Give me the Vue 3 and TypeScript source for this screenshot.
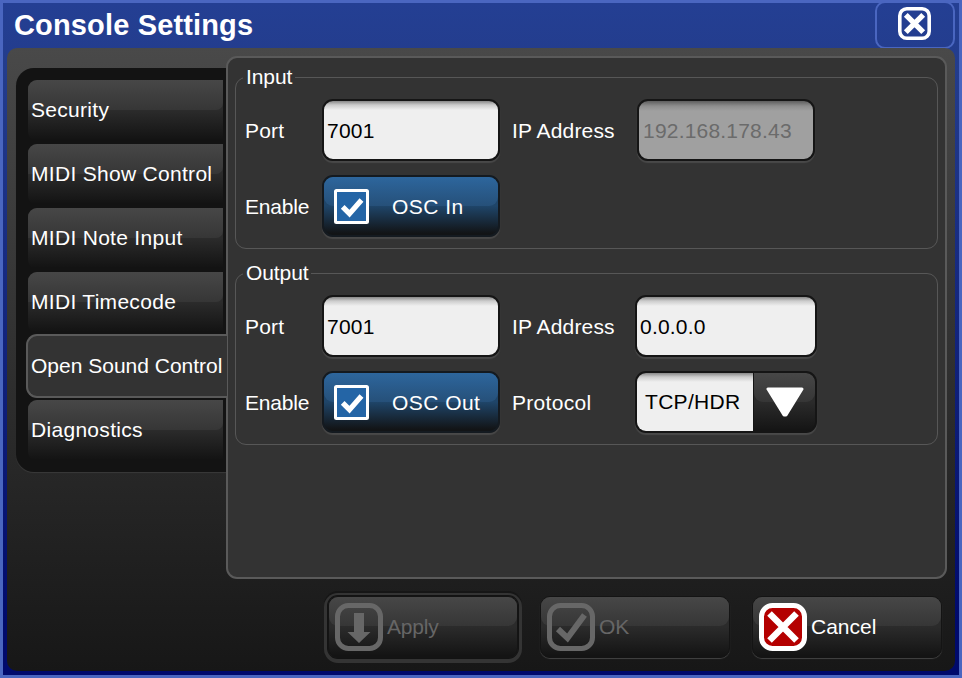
<script setup lang="ts">
import { ref } from 'vue'

const tabs: string[] = [
  'Security',
  'MIDI Show Control',
  'MIDI Note Input',
  'MIDI Timecode',
  'Open Sound Control',
  'Diagnostics',
]
const activeTab = ref('Open Sound Control')
const inputPort = ref('7001')
const outputPort = ref('7001')
const inputAddress = '192.168.178.43'
const outputAddress = ref('0.0.0.0')
const oscIn = ref(true)
const oscOut = ref(true)
const protocol = ref('TCP/HDR')
</script>

<template>
  <div class="window">
    <header class="titlebar">
      <h1>Console Settings</h1>
      <button class="close" aria-label="Close">
        <svg width="33" height="33" viewBox="0 0 33 33">
          <rect x="1.8" y="1.8" width="29.4" height="29.4" rx="7" fill="none" stroke="#fff" stroke-width="3.6" />
          <path d="M7.800 7.800L25.200 25.200M25.200 7.800L7.800 25.200" stroke="#fff" stroke-width="5.4" />
        </svg>
      </button>
    </header>

    <main class="body">
      <div class="content">
        <nav class="tabs">
          <button
            v-for="tab in tabs"
            :key="tab"
            class="tab"
            :class="tab === activeTab ? 'active' : 'gloss'"
            @click="activeTab = tab"
          >
            {{ tab }}
          </button>
        </nav>

        <section class="panel">
          <div class="group">
            <div class="legend">Input</div>
            <div class="grid">
              <span>Port</span>
              <input v-model="inputPort" class="field port" />
              <span>IP Address</span>
              <input :value="inputAddress" class="field disabled" disabled />
              <span class="tight">Enable</span>
              <button class="toggle gloss" @click="oscIn = !oscIn">
                <svg class="box" width="35" height="35" viewBox="0 0 35 35">
                  <rect x="1.5" y="1.5" width="32" height="32" rx="1" fill="#2465a6" stroke="#fff" stroke-width="3" />
                  <path v-if="oscIn" d="M8.700 17.800L15.500 24.600L27.500 11" fill="none" stroke="#fff" stroke-width="5.2" />
                </svg>
                <span>OSC In</span>
              </button>
            </div>
          </div>

          <div class="group">
            <div class="legend">Output</div>
            <div class="grid">
              <span>Port</span>
              <input v-model="outputPort" class="field port" />
              <span>IP Address</span>
              <input v-model="outputAddress" class="field wide" />
              <span class="tight">Enable</span>
              <button class="toggle gloss" @click="oscOut = !oscOut">
                <svg class="box" width="35" height="35" viewBox="0 0 35 35">
                  <rect x="1.5" y="1.5" width="32" height="32" rx="1" fill="#2465a6" stroke="#fff" stroke-width="3" />
                  <path v-if="oscOut" d="M8.700 17.800L15.500 24.600L27.500 11" fill="none" stroke="#fff" stroke-width="5.2" />
                </svg>
                <span>OSC Out</span>
              </button>
              <span class="loose">Protocol</span>
              <div class="combo">
                <div class="value">{{ protocol }}</div>
                <div class="arrow gloss">
                  <svg width="38" height="30" viewBox="0 0 38 30">
                    <path d="M2 2H36L20 28H18Z" fill="#fff" stroke="#fff" stroke-width="3" stroke-linejoin="round" />
                  </svg>
                </div>
              </div>
            </div>
          </div>
        </section>
      </div>

      <footer class="actions">
        <button class="action gloss off focused">
          <svg width="48" height="48" viewBox="0 0 48 48">
            <rect x="2.5" y="2.5" width="43" height="43" rx="11" fill="none" stroke="#676767" stroke-width="5" />
            <path d="M19 10H29V29H35.500L24 40L12.500 29H19Z" fill="#676767" />
          </svg>
          Apply
        </button>
        <button class="action gloss off">
          <svg width="48" height="48" viewBox="0 0 48 48">
            <rect x="2.5" y="2.5" width="43" height="43" rx="11" fill="none" stroke="#676767" stroke-width="5" />
            <path d="M11 26L20.500 35L37.500 12" fill="none" stroke="#676767" stroke-width="6" />
          </svg>
          OK
        </button>
        <button class="action gloss">
          <svg width="48" height="48" viewBox="0 0 48 48">
            <rect x="2.5" y="2.5" width="43" height="43" rx="11" fill="#b40000" stroke="#fff" stroke-width="5" />
            <path d="M10.500 10.500L37.500 37.500M37.500 10.500L10.500 37.500" stroke="#fff" stroke-width="6.500" />
          </svg>
          Cancel
        </button>
      </footer>
    </main>
  </div>
</template>

<style>
body {
  margin: 0;
  background: #243f93;
}
</style>

<style scoped>
* {
  box-sizing: border-box;
}
.window {
  width: 962px;
  height: 678px;
  display: flex;
  flex-direction: column;
  border: 3px solid #4a66c0;
  background: linear-gradient(#243f93, #233c8c 10%, #000a6c 92%);
  font-family: 'Liberation Sans', Arial, sans-serif;
  font-size: 21px;
  letter-spacing: 0.15px;
  color: #fff;
}
button,
input {
  font: inherit;
  letter-spacing: inherit;
  color: inherit;
  margin: 0;
  border: 0;
  outline: 0;
}
.titlebar {
  height: 45px;
  flex: none;
  display: flex;
  justify-content: space-between;
  padding-left: 11px;
}
h1 {
  margin: 0;
  font-size: 29px;
  line-height: 44px;
  letter-spacing: 0.15px;
}
.close {
  width: 80px;
  height: 48px;
  margin: -2px 4px 0 0;
  padding: 0 1px 3px 0;
  border: 2px solid #4a66c0;
  border-radius: 10px;
  background: transparent;
  display: flex;
  align-items: center;
  justify-content: center;
}
.body {
  flex: none;
  width: 948px;
  height: 623px;
  margin-left: 4px;
  padding: 8px 9px 0;
  border-radius: 10px;
  background: linear-gradient(#494949, #171717);
}
.content {
  display: flex;
  align-items: flex-start;
}
.gloss {
  position: relative;
  isolation: isolate;
}
/* Sheen laid over the upper half of raised controls */
.gloss::before {
  content: '';
  position: absolute;
  z-index: -1;
  top: 0;
  left: 0;
  right: 0;
  height: 29px;
  border-radius: 9px;
  background: linear-gradient(#474747, #363636);
}
.tabs {
  flex: none;
  width: 211px;
  height: 404px;
  margin: 12px -1px 0 0;
  padding: 12px 0 0 12px;
  border-radius: 18px 0 0 18px;
  background: #131313;
  box-shadow: 0 1px 1px #3a3a3a;
}
.tab {
  display: block;
  width: 195px;
  height: 61px;
  margin-bottom: 3px;
  padding: 0 0 1px 3px;
  text-align: left;
  white-space: nowrap;
  letter-spacing: 0.3px;
  border-radius: 9px 0 0 9px;
  background: linear-gradient(#2b2b2b 50%, #131313 98%);
}
.tab.gloss::before {
  height: 30px;
  border-radius: 9px 0 7px 0;
}
.tab.active {
  position: relative;
  width: 201px;
  height: 64px;
  margin: -2px 0 2px -2px;
  border: 2px solid #5a5a5a;
  border-right: 0;
  border-radius: 11px 0 0 11px;
  letter-spacing: 0;
  background: #333;
}
.panel {
  flex: none;
  width: 721px;
  height: 523px;
  padding: 9px 7px 0;
  border: 2px solid #5a5a5a;
  border-radius: 11px;
  background: #333;
}
.group {
  height: 172px;
  border: 1px solid #575757;
  border-radius: 11px;
  margin: 10px 0 24px;
  width: 703px;
}
.group .legend {
  width: fit-content;
  margin: -13px 0 0 7px;
  padding: 0 3px;
  line-height: 24px;
  letter-spacing: -0.1px;
  background: #333;
}
.grid {
  display: grid;
  grid-template-columns: 77px 190px 123px 182px;
  grid-auto-rows: 76px;
  margin: 3px 0 0 9px;
  align-items: center;
}
.grid span {
  padding-top: 2px;
}
.tight {
  letter-spacing: -0.2px;
}
.loose {
  letter-spacing: 0.3px;
}
.field {
  width: 178px;
  height: 62px;
  border: 2px solid #151515;
  border-radius: 11px;
  padding: 2px 0 0 3px;
  color: #000;
  letter-spacing: 0.2px;
  background: linear-gradient(#888, #ccc 4px, #efefef 9px);
  box-shadow: 0 2px 1px #494949;
}
.field.disabled {
  margin-left: 2px;
  padding-left: 4px;
  color: #6b6b6b;
  background: linear-gradient(#5e5e5e, #8d8d8d 5px, #a0a0a0 10px);
}
.field.wide {
  width: 182px;
}
.toggle {
  display: flex;
  align-items: center;
  width: 178px;
  height: 62px;
  padding: 0 0 0 10px;
  border: 2px solid #141a20;
  border-radius: 11px;
  letter-spacing: 0.45px;
  background: linear-gradient(#1f4569 50%, #121416 97%);
  box-shadow: 0 2px 1px #494949;
}
.toggle.gloss::before {
  background: linear-gradient(#2d669d, #265079);
}
.box {
  margin-right: 23px;
}
.combo {
  width: 182px;
  height: 62px;
  display: flex;
  border: 2px solid #151515;
  border-radius: 11px;
  overflow: hidden;
  background: #151515;
  box-shadow: 0 2px 1px #494949;
}
.combo .value {
  width: 116px;
  padding-left: 8px;
  line-height: 57px;
  letter-spacing: 0.3px;
  color: #000;
  background: linear-gradient(#888, #ccc 4px, #efefef 9px);
}
.combo .arrow {
  flex: 1;
  margin-left: 1px;
  display: flex;
  align-items: center;
  justify-content: center;
  background: linear-gradient(#2b2b2b 50%, #151515 98%);
}
.combo .arrow.gloss::before {
  border-radius: 0 9px 9px 9px;
}
.actions {
  display: flex;
  gap: 22px;
  justify-content: flex-end;
  margin: 17px 4px 0 0;
}
.action {
  display: flex;
  align-items: center;
  gap: 4px;
  width: 190px;
  height: 62px;
  padding: 0 0 0 6px;
  border: 1px solid #141414;
  border-radius: 10px;
  letter-spacing: 0;
  background: linear-gradient(#2b2b2b 50%, #141414 98%);
  box-shadow: 0 1px 1px #444;
}
.action.off {
  color: #666;
  letter-spacing: -0.2px;
}
.action.focused {
  box-shadow:
    0 0 0 1px #131313,
    0 1px 0 4px #343434,
    0 -1px 0 4px #161616;
}
</style>
